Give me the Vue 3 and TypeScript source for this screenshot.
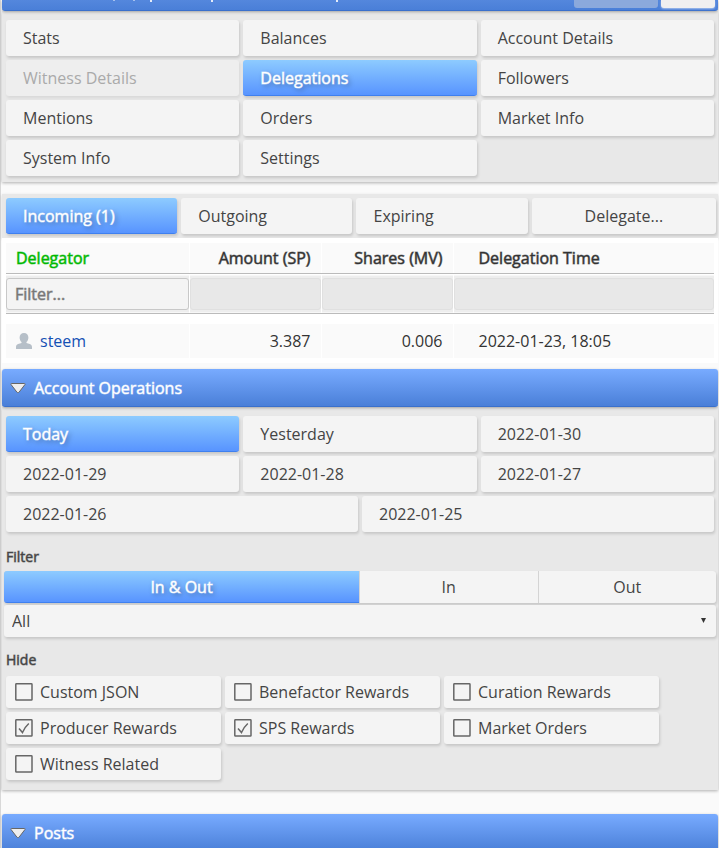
<script setup lang="ts">
import { ref } from 'vue'

interface Item {
  label: string
  disabled?: boolean
}

const sections: Item[] = [
  { label: 'Stats' },
  { label: 'Balances' },
  { label: 'Account Details' },
  { label: 'Witness Details', disabled: true },
  { label: 'Delegations' },
  { label: 'Followers' },
  { label: 'Mentions' },
  { label: 'Orders' },
  { label: 'Market Info' },
  { label: 'System Info' },
  { label: 'Settings' },
]
const activeSection = ref('Delegations')

const directions = ['Incoming (1)', 'Outgoing', 'Expiring']
const activeDirection = ref('Incoming (1)')

const days = ['Today', 'Yesterday', '2022-01-30', '2022-01-29', '2022-01-28', '2022-01-27']
const olderDays = ['2022-01-26', '2022-01-25']
const activeDay = ref('Today')

const flows = ['In & Out', 'In', 'Out']
const activeFlow = ref('In & Out')

const query = ref('')
const operation = ref('All')

const hidden = ref([
  { label: 'Custom JSON', checked: false },
  { label: 'Benefactor Rewards', checked: false },
  { label: 'Curation Rewards', checked: false },
  { label: 'Producer Rewards', checked: true },
  { label: 'SPS Rewards', checked: true },
  { label: 'Market Orders', checked: false },
  { label: 'Witness Related', checked: false },
])
</script>

<template>
  <main class="page">
    <header class="bar bar-top">
      <svg class="specks" viewBox="0 0 240 2" aria-hidden="true">
        <path class="faint" d="M1 0h2v1h-2zM21 0h2v1h-2z" />
        <path d="M38 0h2v2h-2zM99 0h2v2h-2zM224 0h2v2h-2z" />
      </svg>
      <span class="bar-tools">
        <span class="tool tool-dim"></span>
        <span class="tool"></span>
      </span>
    </header>

    <nav class="panel thirds" aria-label="Account sections">
      <button
        v-for="s in sections"
        :key="s.label"
        type="button"
        class="tab"
        :class="{ active: s.label === activeSection }"
        :disabled="s.disabled"
        @click="activeSection = s.label"
      >{{ s.label }}</button>
    </nav>

    <section class="delegations">
      <div class="directions">
        <button
          v-for="d in directions"
          :key="d"
          type="button"
          class="tab"
          :class="{ active: d === activeDirection }"
          @click="activeDirection = d"
        >{{ d }}</button>
        <button type="button" class="tab centered">Delegate...</button>
      </div>

      <div class="table-wrap">
        <table>
          <colgroup>
            <col class="col-name" />
            <col class="col-num" />
            <col class="col-num" />
            <col />
          </colgroup>
          <thead>
            <tr class="titles">
              <th class="sorted">Delegator</th>
              <th class="num">Amount (SP)</th>
              <th class="num">Shares (MV)</th>
              <th class="time">Delegation Time</th>
            </tr>
            <tr class="filters">
              <td><input v-model="query" type="text" placeholder="Filter..." aria-label="Filter delegators" /></td>
              <td><input type="text" disabled aria-label="Amount" /></td>
              <td><input type="text" disabled aria-label="Shares" /></td>
              <td><input type="text" disabled aria-label="Time" /></td>
            </tr>
          </thead>
          <tbody>
            <tr class="spacer"><td colspan="4"></td></tr>
            <tr class="entry">
              <td>
                <a href="#steem">
                  <svg class="user" viewBox="0 0 16 16" aria-hidden="true">
                    <path d="M8 0C5.300 0 3.600 1.900 3.600 4.400c0 1.800.7 3.600 1.900 4.700v1C3.800 10.600 0 11 0 14v2h16v-2c0-3-3.800-3.400-5.500-3.900v-1c1.200-1.100 1.900-2.900 1.900-4.700C12.400 1.900 10.700 0 8 0z" />
                  </svg>steem</a>
              </td>
              <td class="num">3.387</td>
              <td class="num">0.006</td>
              <td class="time">2022-01-23, 18:05</td>
            </tr>
          </tbody>
        </table>
      </div>
    </section>

    <h2 class="bar">
      <svg class="arrow" viewBox="0 0 16 12" aria-hidden="true">
        <path d="M1.500 1.500h13c.7 0 .8.6.4 1.100L9.200 10c-.7.8-1.700.8-2.400 0L1.100 2.600c-.4-.5-.3-1.100.4-1.100z" />
      </svg>
      <span>Account Operations</span>
    </h2>

    <section class="panel operations">
      <div class="thirds">
        <button
          v-for="d in days"
          :key="d"
          type="button"
          class="tab"
          :class="{ active: d === activeDay }"
          @click="activeDay = d"
        >{{ d }}</button>
      </div>
      <div class="halves">
        <button
          v-for="d in olderDays"
          :key="d"
          type="button"
          class="tab"
          :class="{ active: d === activeDay }"
          @click="activeDay = d"
        >{{ d }}</button>
      </div>

      <h3>Filter</h3>
      <div class="flows">
        <button
          v-for="f in flows"
          :key="f"
          type="button"
          class="flow"
          :class="{ active: f === activeFlow }"
          @click="activeFlow = f"
        >{{ f }}</button>
      </div>
      <div class="picker">
        <select v-model="operation" aria-label="Operation type">
          <option>All</option>
        </select>
        <svg class="caret" viewBox="0 0 5 5" aria-hidden="true"><path d="M0 0h5L2.500 5z" /></svg>
      </div>

      <h3>Hide</h3>
      <div class="checks">
        <label v-for="h in hidden" :key="h.label" class="check">
          <input v-model="h.checked" type="checkbox" />
          <svg class="box" viewBox="0 0 18 18" aria-hidden="true">
            <rect x=".8" y=".8" width="16.200" height="16.200" rx=".6" />
            <path v-if="h.checked" d="M4 9.500l3.500 4C9 10 11 7 13.800 4.500" />
          </svg>
          <span>{{ h.label }}</span>
        </label>
      </div>
    </section>

    <h2 class="bar">
      <svg class="arrow" viewBox="0 0 16 12" aria-hidden="true">
        <path d="M1.500 1.500h13c.7 0 .8.6.4 1.100L9.200 10c-.7.8-1.700.8-2.400 0L1.100 2.600c-.4-.5-.3-1.100.4-1.100z" />
      </svg>
      <span>Posts</span>
    </h2>
  </main>
</template>

<style>
body {
  background: #fafafa;
  overflow: hidden;
}
</style>

<style scoped>
.page {
  --embolden: 1px color-mix(in srgb, currentcolor 55%, transparent);
  border-left: 1px solid #d8d8d8;
  padding: 0 1px;
  color: #444;
  font: 16px/20px "Open Sans", sans-serif;
}
.page *,
.page {
  box-sizing: border-box;
}
button,
input,
select {
  margin: 0;
  border: 0;
  color: inherit;
  font: inherit;
}
.bar {
  display: flex;
  position: relative;
  align-items: center;
  gap: 8px;
  height: 38px;
  margin: 0;
  padding: 0 8px;
  border-radius: 3px;
  border-bottom: 1px solid #3a70cc;
  background: linear-gradient(#78abff, #4a7fd8);
  box-shadow: 0 1px 3px rgba(0, 0, 0, 0.3);
  color: #fff;
  font: inherit;
  -webkit-text-stroke: var(--embolden);
}
.bar-top {
  align-items: flex-start;
  justify-content: space-between;
  height: 11px;
  padding: 0 3px 0 110px;
  border-radius: 0 0 3px 3px;
  background: linear-gradient(#5487dd, #4a7fd8);
}
.specks {
  width: 240px;
  height: 2px;
  fill: #e4ecfa;
}
.faint {
  fill: #a5c0ee;
}
.bar-tools {
  display: flex;
  gap: 3px;
}
.tool {
  width: 54px;
  height: 8px;
  border-radius: 0 0 3px 3px;
  background: #f0f0f0;
  box-shadow: 0 1px 2px rgba(255, 255, 255, 0.5);
}
.tool-dim {
  width: 84px;
  background: #8ba9dc;
  box-shadow: none;
}
.arrow {
  width: 16px;
  height: 12px;
  fill: #eee;
  stroke: #666;
}
.panel {
  padding: 9px 4px 6px;
  background: #e8e8e8;
  box-shadow: 0 1px 3px rgba(0, 0, 0, 0.3);
}
.thirds,
.halves {
  display: grid;
  grid-template-columns: repeat(3, 1fr);
  gap: 4px;
}
.halves {
  grid-template-columns: repeat(2, 1fr);
  margin-top: 4px;
}
.operations {
  margin-bottom: 24px;
  padding-bottom: 10px;
}
.tab {
  height: 36px;
  padding: 0 17px;
  border-radius: 3px;
  background: #f4f4f4;
  box-shadow: 1px 2px 3px rgba(0, 0, 0, 0.15);
  text-align: left;
}
.tab:disabled {
  background: #eee;
  box-shadow: 1px 2px 3px rgba(0, 0, 0, 0.07);
  color: #aaa;
}
.centered {
  text-align: center;
}
.tab.active,
.flow.active {
  border-bottom: 1px solid #3f80ef;
  background: linear-gradient(#8dcbff, #5894ff);
  color: #fff;
  text-shadow: 2px 2px 5px rgba(0, 0, 0, 0.4);
  -webkit-text-stroke: var(--embolden);
}
.delegations {
  margin-top: 12px;
}
.directions {
  display: grid;
  grid-template-columns: 171fr 171fr 171fr 184fr;
  gap: 4px;
  padding: 4px 2px 4px 4px;
  background: #e8e8e8;
  box-shadow: 0 1px 3px rgba(0, 0, 0, 0.15);
}
.table-wrap {
  position: relative;
  padding: 5px 4px;
  background: #fff;
}
table {
  width: 100%;
  border-collapse: collapse;
  table-layout: fixed;
  color: #333;
}
.col-name {
  width: 183px;
}
.col-num {
  width: 132px;
}
th,
td {
  padding: 0 10px;
  text-align: left;
  font-weight: 400;
}
.titles th {
  height: 30px;
  border-bottom: 1px solid #bbb;
  background: #fafafa;
  -webkit-text-stroke: var(--embolden);
}
.titles .sorted {
  color: #00b800;
}
.titles th + th,
.filters td + td,
.entry td + td {
  border-left: 1px solid #fff;
}
.titles .num,
.entry .num {
  text-align: right;
}
.titles .time,
.entry .time {
  padding-left: 25px;
}
.filters td {
  height: 40px;
  padding: 4px 0 3px;
  border-bottom: 1px solid #bbb;
  background: linear-gradient(#fff 2px, #eee 2px);
}
.filters input {
  display: block;
  width: 100%;
  height: 32px;
  padding: 0 8px;
  border: 1px solid #c8c8c8;
  border-radius: 3px;
  background: #f4f4f4;
}
.filters input:disabled {
  border-color: #e0e0e0;
  background: #e8e8e8;
}
.filters input::placeholder {
  color: #777;
  opacity: 1;
  -webkit-text-stroke: var(--embolden);
}
.spacer td {
  height: 11px;
  padding: 0;
}
.entry td {
  height: 34px;
  background: #fafafa;
}
.entry a {
  display: flex;
  align-items: center;
  gap: 8px;
  color: #1450b4;
  text-decoration: none;
}
.user {
  width: 16px;
  height: 16px;
  fill: #b6bfc8;
}
.delegations + .bar {
  margin-top: 6px;
}
h3 {
  margin: 15px 0 4px;
  font-size: 14px;
  line-height: 20px;
  font-weight: 400;
  -webkit-text-stroke: var(--embolden);
}
.flows {
  display: grid;
  grid-template-columns: 2fr 1fr 1fr;
  gap: 1px;
  margin: 0 -2px;
  border-radius: 3px;
  background: #d4d4d4;
  box-shadow: 1px 2px 3px rgba(0, 0, 0, 0.15);
  overflow: hidden;
}
.flow {
  height: 32px;
  padding: 0;
  background: #f4f4f4;
}
.picker {
  position: relative;
  margin: 2px -2px 0;
}
.picker + h3 {
  margin-top: 13px;
}
select {
  display: block;
  width: 100%;
  height: 32px;
  padding: 0 8px;
  border-radius: 3px;
  appearance: none;
  background: #f4f4f4;
  box-shadow: 1px 2px 3px rgba(0, 0, 0, 0.15);
}
.caret {
  position: absolute;
  top: 13px;
  right: 10px;
  width: 5px;
  height: 5px;
  fill: #333;
  pointer-events: none;
}
.checks {
  display: flex;
  flex-wrap: wrap;
  gap: 4px;
  margin-top: 6px;
  padding-right: 50px;
}
.check {
  position: relative;
  display: flex;
  align-items: center;
  gap: 7px;
  width: 215px;
  height: 32px;
  padding: 0 0 0 9px;
  border-radius: 3px;
  background: #f4f4f4;
  box-shadow: 1px 2px 3px rgba(0, 0, 0, 0.15);
}
.check input {
  position: absolute;
  inset: 0;
  width: 100%;
  height: 100%;
  opacity: 0;
}
.box {
  width: 18px;
  height: 18px;
  fill: none;
  stroke: #666;
  stroke-width: 1.5;
}
</style>
